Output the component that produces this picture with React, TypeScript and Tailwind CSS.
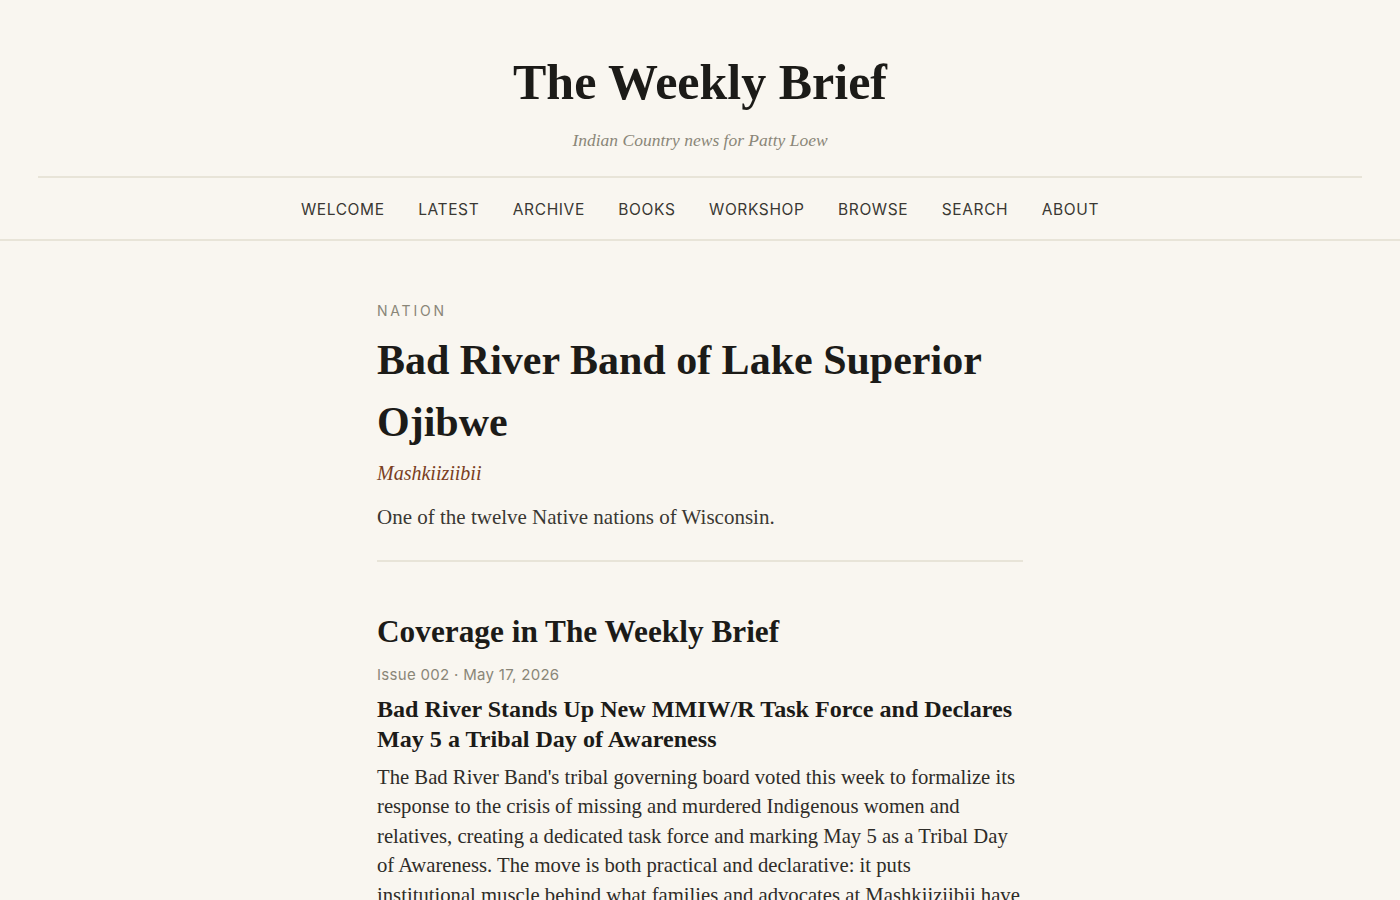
import React from "react";

const nav = ["WELCOME", "LATEST", "ARCHIVE", "BOOKS", "WORKSHOP", "BROWSE", "SEARCH", "ABOUT"];

export default function App() {
  return (
    <div className="min-h-[900px] w-full bg-[#f9f6f0] text-[#1c1b18] font-['Liberation_Serif','Times_New_Roman',serif]">
      <header className="pt-[52px]">
        <div className="px-[38px]">
          <h1 className="text-center text-[50px] leading-[60px] font-bold text-[#1c1b18]">The Weekly Brief</h1>
          <p className="mt-[16px] text-center text-[17.5px] italic leading-[24px] text-[#8a8678]">
            Indian Country news for Patty Loew
          </p>
          <div className="mt-[24px] h-[2px] bg-[#e8e4d8]" />
        </div>
        <nav className="flex h-[63px] items-center justify-center gap-[33.5px] border-b-2 border-[#e8e4d8] font-['Inter','Liberation_Sans',sans-serif]">
          {nav.map((n) => (
            <a key={n} className="pt-[2px] text-[15.5px] tracking-[0.04em] text-[#3a3833]">
              {n}
            </a>
          ))}
        </nav>
      </header>
      <main className="mx-auto w-[646px] pt-[60px]">
        <div className="font-['Inter','Liberation_Sans',sans-serif] text-[14px] leading-[20px] tracking-[0.2em] text-[#8a8678]">
          NATION
        </div>
        <h2 className="mt-[8px] text-[42px] leading-[62px] font-bold text-[#1c1b18]">
          Bad River Band of Lake Superior Ojibwe
        </h2>
        <p className="mt-[7px] text-[20px] italic leading-[26px] text-[#7a3e22]">Mashkiiziibii</p>
        <p className="mt-[18px] text-[21px] leading-[26px] text-[#3a3833]">
          One of the twelve Native nations of Wisconsin.
        </p>
        <div className="mt-[30px] h-[2px] bg-[#e8e4d8]" />
        <h3 className="mt-[50px] text-[31.3px] leading-[40px] font-bold text-[#1c1b18]">
          Coverage in The Weekly Brief
        </h3>
        <div className="mt-[13px] font-['Inter','Liberation_Sans',sans-serif] text-[15px] leading-[20px] tracking-[0.02em] text-[#8a8678]">
          Issue 002 · May 17, 2026
        </div>
        <h4 className="mt-[9px] text-[24.1px] leading-[30px] font-bold text-[#1c1b18]">
          Bad River Stands Up New MMIW/R Task Force and Declares May 5 a Tribal Day of Awareness
        </h4>
        <p className="mt-[9px] text-[20.7px] leading-[29.4px] text-[#2e2c28]">
          The Bad River Band's tribal governing board voted this week to formalize its response to the crisis of
          missing and murdered Indigenous women and relatives, creating a dedicated task force and marking May 5 as a
          Tribal Day of Awareness. The move is both practical and declarative: it puts
          <br />
          institutional muscle behind what families and advocates at Mashkiiziibii have long been doing on their own.
        </p>
      </main>
    </div>
  );
}
